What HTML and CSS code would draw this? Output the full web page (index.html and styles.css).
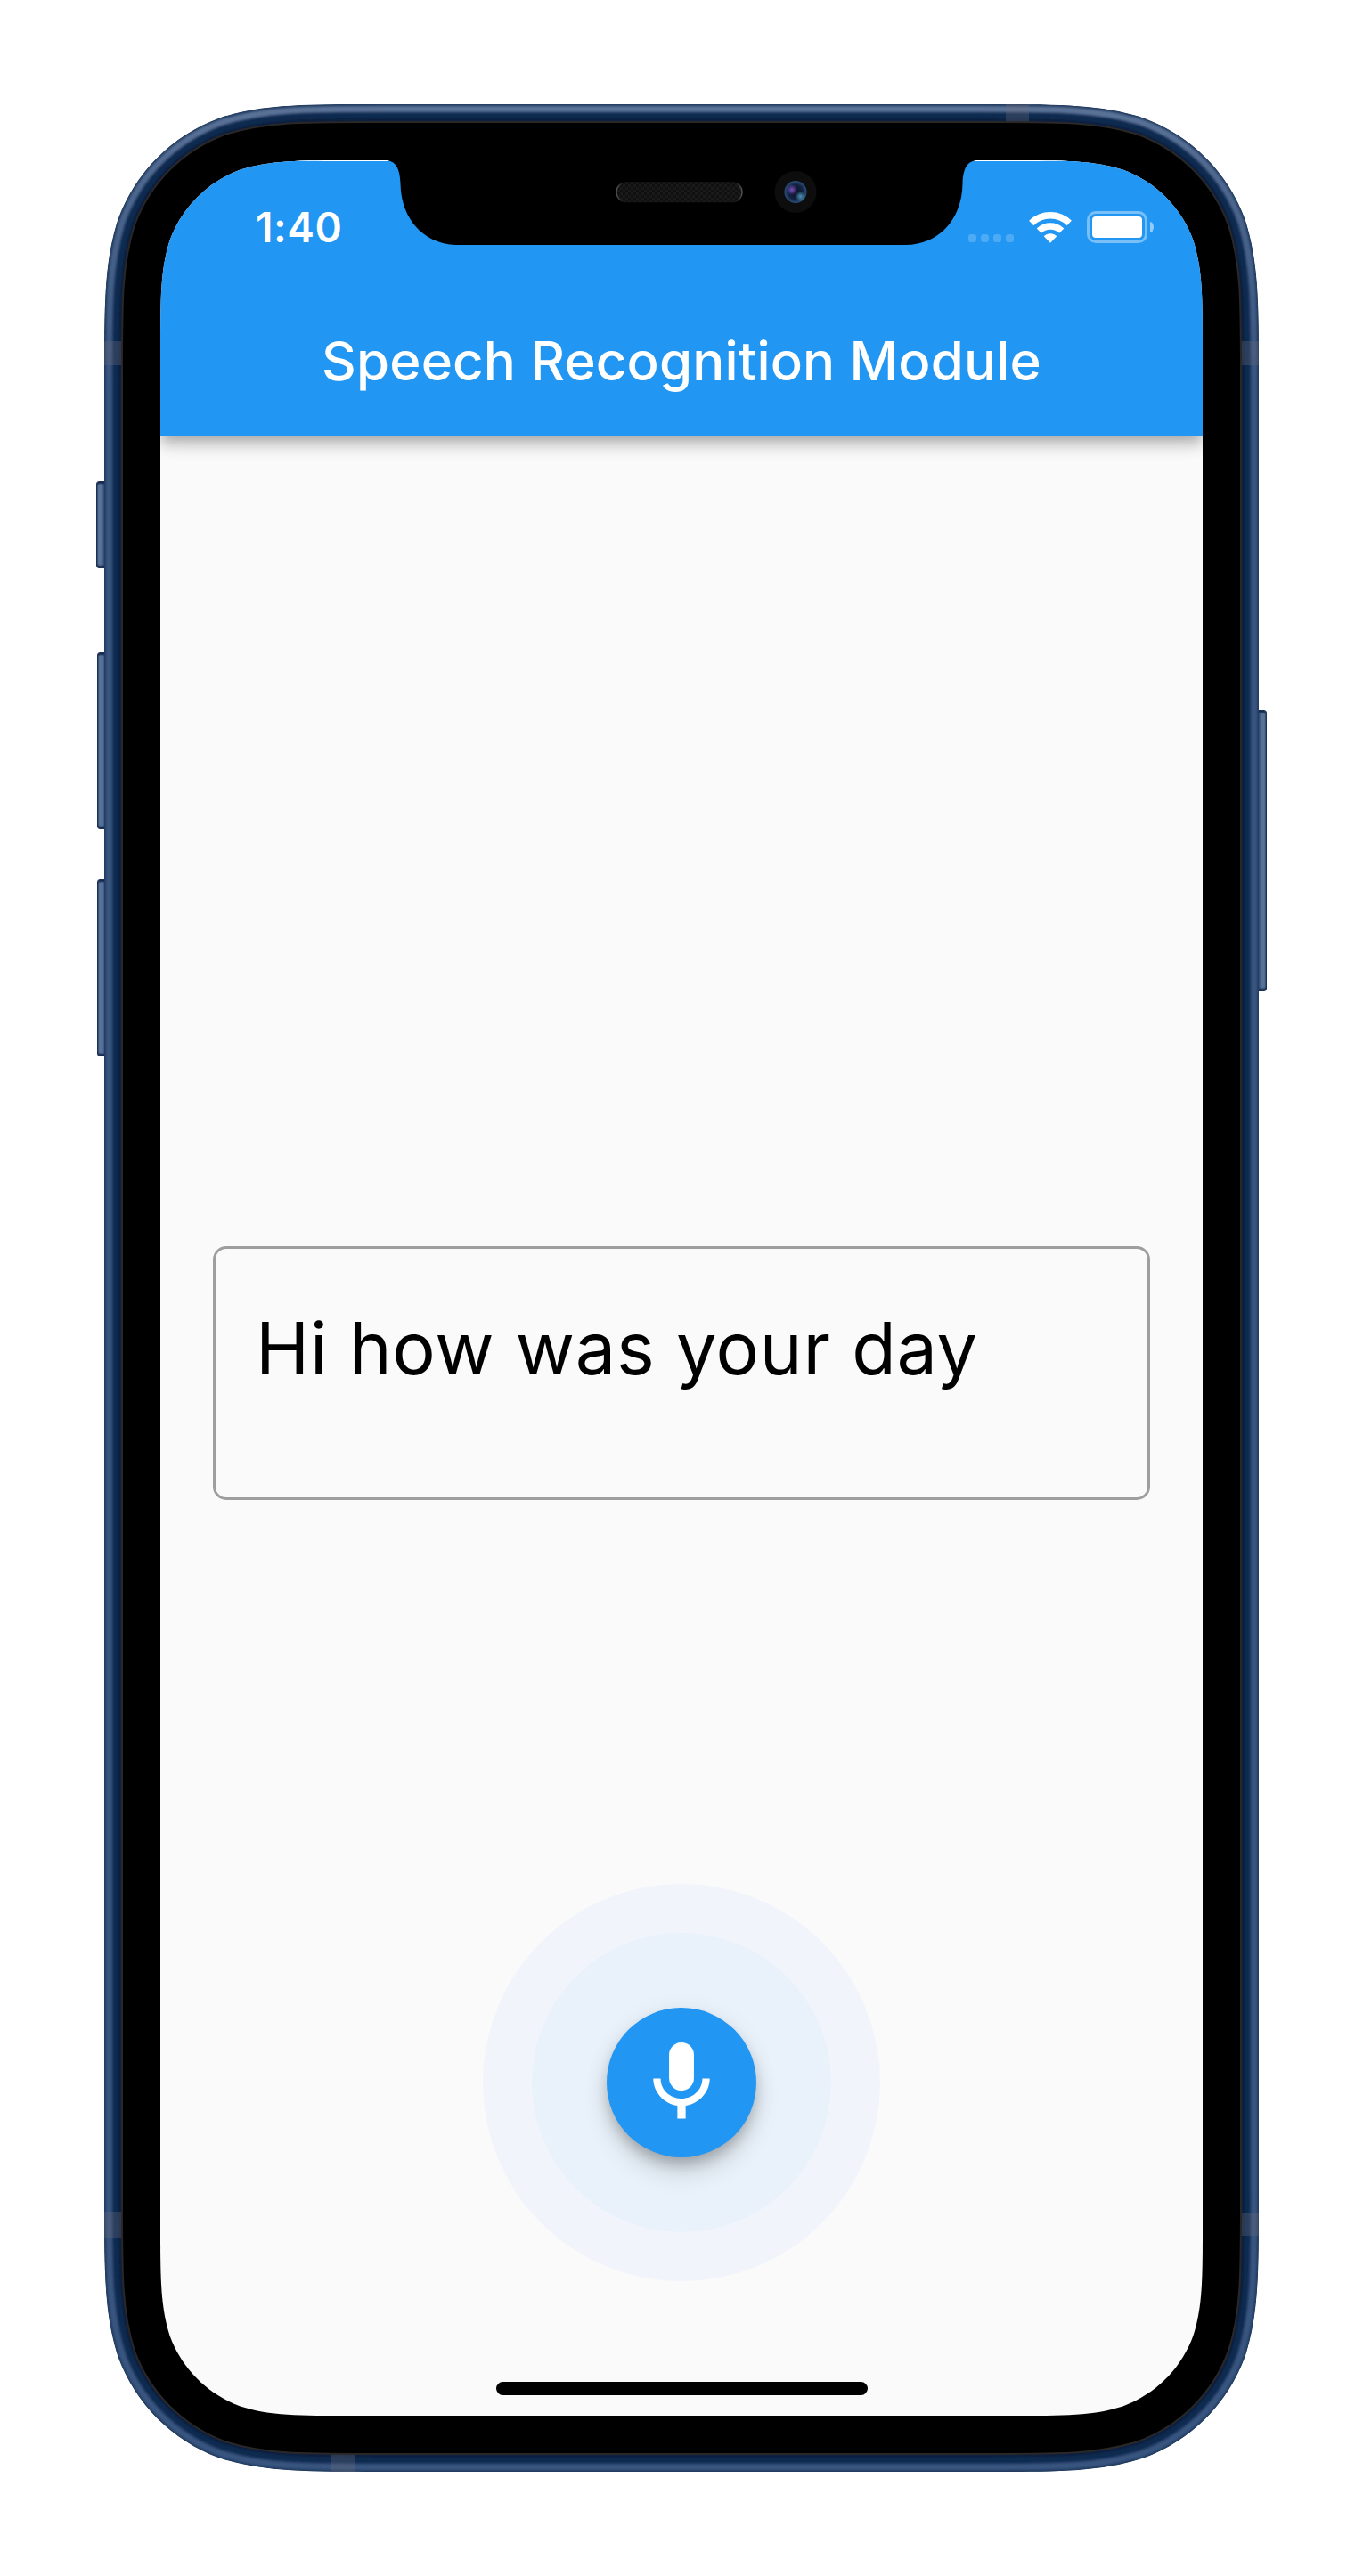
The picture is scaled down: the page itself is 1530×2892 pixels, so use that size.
FILE: index.html
```html
<!DOCTYPE html>
<html lang="en">
<head>
<meta charset="utf-8">
<title>Speech Recognition Module</title>
<link rel="stylesheet" href="styles.css">
</head>
<body>
<div class="phone">
  <i class="key key-mute"></i>
  <i class="key key-up"></i>
  <i class="key key-down"></i>
  <i class="key key-power"></i>

  <svg class="shell" viewBox="0 0 1296 2658" aria-hidden="true">
    <defs>
      <path id="body" d="M313.4 0H982.6C1072.9 0 1118 0 1166.5 15.4C1219.6 34.7 1261.3 76.4 1280.6 129.5C1296 178 1296 223.1 1296 313.4V2344.6C1296 2434.9 1296 2480 1280.6 2528.5C1261.3 2581.6 1219.6 2623.3 1166.5 2642.6C1118 2658 1072.9 2658 982.6 2658H313.4C223.1 2658 178 2658 129.5 2642.6C76.4 2623.3 34.7 2581.6 15.4 2528.5C0 2480 0 2434.9 0 2344.6V313.4C0 223.1 0 178 15.4 129.5C34.7 76.4 76.4 34.7 129.5 15.4C178 0 223.1 0 313.4 0Z"/>
      <clipPath id="bodyClip"><use href="#body"/></clipPath>
      <linearGradient id="shine" gradientUnits="userSpaceOnUse" x1="0" y1="0" x2="0" y2="330">
        <stop offset="0" stop-color="#5b7397"/>
        <stop offset=".35" stop-color="#4b658c"/>
        <stop offset="1" stop-color="#37547f"/>
      </linearGradient>
      <filter id="soft" x="-2%" y="-2%" width="104%" height="104%"><feGaussianBlur stdDeviation="1"/></filter>
    </defs>
    <g clip-path="url(#bodyClip)">
      <use href="#body" fill="#0d2040"/>
      <g fill="none" filter="url(#soft)">
        <use href="#body" stroke="#112a50" stroke-width="32"/>
        <use href="#body" stroke="#1c365e" stroke-width="21"/>
        <use href="#body" stroke="url(#shine)" stroke-width="17"/>
        <use href="#body" stroke="#2c4870" stroke-width="5"/>
        <use href="#body" stroke="#1f3558" stroke-width="2"/>
      </g>
      <g fill="#6a6a78" fill-opacity=".33">
        <path d="M0 266h20v27H0zM1276 266h20v27h-20zM0 2366h20v29H0zM1276 2367h20v26h-20zM1012 0h26v20h-26zM255 2638h27v20h-27z"/>
      </g>
    </g>
    <path fill="#000" stroke="#2a2827" stroke-width="2" d="M301.3 20H994.7C1075.7 20 1116.2 20 1159.8 33.8C1207.4 51.1 1244.9 88.6 1262.2 136.2C1276 179.8 1276 220.3 1276 301.3V2356.7C1276 2437.7 1276 2478.2 1262.2 2521.8C1244.9 2569.4 1207.4 2606.9 1159.8 2624.2C1116.2 2638 1075.7 2638 994.7 2638H301.3C220.3 2638 179.8 2638 136.2 2624.2C88.6 2606.9 51.1 2569.4 33.8 2521.8C20 2478.2 20 2437.7 20 2356.7V301.3C20 220.3 20 179.8 33.8 136.2C51.1 88.6 88.6 51.1 136.2 33.8C179.8 20 220.3 20 301.3 20Z"/>
  </svg>

  <div class="screen">
    <header class="app-bar">
      <div class="status">
        <span class="time">1:40</span>
        <div class="indicators">
          <div class="cell"><i></i><i></i><i></i><i></i></div>
          <svg class="wifi" width="50" height="38" viewBox="0 0 50 38" aria-hidden="true">
            <path fill="#fff" stroke="#fff" stroke-width="1" stroke-linejoin="round" d="M25 36.3L18.2 29.3C22 26 28 26 31.8 29.3Z"/>
            <path fill="none" stroke="#fff" stroke-width="7.4" d="M12.3 23.2C19.3 16.2 30.7 16.2 37.7 23.2"/>
            <path fill="none" stroke="#fff" stroke-width="7.4" d="M3.7 14.5C15.5 2.8 34.5 2.8 46.3 14.5"/>
          </svg>
          <div class="battery"><i></i></div>
          <i class="battery-tip"></i>
        </div>
      </div>
      <h1 class="title">Speech Recognition Module</h1>
    </header>
    <main class="content">
      <div class="result">Hi how was your day</div>
      <div class="halo-outer">
        <div class="halo-inner">
          <button class="mic" aria-label="Listen">
            <svg width="108" height="108" viewBox="0 0 24 24" fill="#fff" aria-hidden="true">
              <rect x="8.9" y="2" width="6.2" height="12" rx="3.1"/>
              <path d="M17.2 11c0 3-2.5 5-5.2 5S6.8 14 6.8 11H4.95c0 3.4 2.7 6.3 6.02 6.8V21h2.06v-3.2c3.3-.5 6.02-3.4 6.02-6.8z"/>
            </svg>
          </button>
        </div>
      </div>
      <div class="home-bar"></div>
    </main>
  </div>

  <svg class="notch" width="666" height="96" viewBox="432 180 666 96" aria-hidden="true">
    <defs>
      <pattern id="mesh" width="6" height="6" patternUnits="userSpaceOnUse">
        <rect width="6" height="6" fill="#101010"/><path fill="#1a1a1a" d="M0 0h3v3H0zM3 3h3v3H3z"/>
      </pattern>
      <linearGradient id="rim" x1="0" x2="1" y1="0" y2="0">
        <stop offset="0" stop-color="#505050"/><stop offset=".05" stop-color="#161616"/>
        <stop offset=".95" stop-color="#161616"/><stop offset="1" stop-color="#505050"/>
      </linearGradient>
      <radialGradient id="lens">
        <stop offset="0" stop-color="#0a1228"/><stop offset=".65" stop-color="#14213f"/><stop offset="1" stop-color="#2a507e"/>
      </radialGradient>
      <radialGradient id="violet"><stop offset="0" stop-color="#7a4fc0"/><stop offset="1" stop-color="#7a4fc0" stop-opacity="0"/></radialGradient>
      <radialGradient id="cyan"><stop offset="0" stop-color="#4b93b5"/><stop offset="1" stop-color="#4b93b5" stop-opacity="0"/></radialGradient>
    </defs>
    <path fill="#000" d="M432 180C444 180 449 189 449.5 206C450 246 476 275 514 275H1016C1054 275 1080 246 1080.5 206C1081 189 1086 180 1098 180Z"/>
    <rect x="692" y="205" width="141" height="21.5" rx="10.7" fill="url(#mesh)" stroke="url(#rim)" stroke-width="1.5"/>
    <circle cx="893" cy="215.5" r="23.5" fill="#0d0d0d"/>
    <circle cx="893" cy="215.5" r="12.5" fill="url(#lens)"/>
    <circle cx="889" cy="213" r="6" fill="url(#violet)"/>
    <circle cx="898.5" cy="220.5" r="6" fill="url(#cyan)"/>
  </svg>
</div>
</body>
</html>
```
FILE: styles.css
```css
* { box-sizing: border-box; }

body {
  margin: 0;
  background: #fff;
  font-family: Inter, "Liberation Sans", sans-serif;
}

.phone {
  position: relative;
  width: 1296px;
  height: 2658px;
  margin: 117px;
  padding: 63px;
}

.shell {
  position: absolute;
  inset: 0;
  width: 1296px;
  height: 2658px;
}

/* Hardware buttons stick out beyond the frame */
.key {
  position: absolute;
  left: -8px;
  width: 14px;
  border: 1px solid #1c3056;
  border-radius: 3px;
  background: linear-gradient(90deg, #5d779c, #566f94 45%, #34507a 62%);
  box-shadow: inset 0 2px 2px #14264a, inset 0 -2px 2px #14264a;
}
.key-mute { left: -9px; top: 423px; height: 98px; }
.key-up { top: 615px; height: 199px; }
.key-down { top: 870px; height: 199px; }
.key-power {
  left: auto;
  right: -9px;
  top: 680px;
  height: 316px;
  background: linear-gradient(270deg, #5d779c, #546d92 45%, #34507a 62%);
}

.screen {
  position: relative;
  display: flex;
  flex-direction: column;
  width: 1170px;
  height: 2532px;
  background: #fafafa;
  clip-path: path("M217.1 0H952.9C1015.4 0 1046.7 0 1080.3 10.6C1117.1 24 1146 52.9 1159.4 89.7C1170 123.3 1170 154.6 1170 217.1V2314.9C1170 2377.4 1170 2408.7 1159.4 2442.3C1146 2479.1 1117.1 2508 1080.3 2521.4C1046.7 2532 1015.4 2532 952.9 2532H217.1C154.6 2532 123.3 2532 89.7 2521.4C52.9 2508 24 2479.1 10.6 2442.3C0 2408.7 0 2377.4 0 2314.9V217.1C0 154.6 0 123.3 10.6 89.7C24 52.9 52.9 24 89.7 10.6C123.3 0 154.6 0 217.1 0Z");
}

.app-bar {
  position: relative;
  flex: none;
  height: 310px;
  border-top: 1px solid #fff;
  background: #2196f3;
  color: #fff;
  box-shadow: 0 6px 12px -3px rgba(0, 0, 0, .2), 0 12px 15px rgba(0, 0, 0, .14), 0 3px 30px rgba(0, 0, 0, .06);
}

.status {
  display: flex;
  justify-content: space-between;
  height: 140px;
  padding: 46px 55px 0 107px;
}
.time {
  font-size: 46px;
  line-height: 56px;
  font-weight: 600;
  letter-spacing: .6px;
}
.indicators {
  display: flex;
  align-items: flex-start;
  padding-top: 9px;
}
.cell { display: flex; gap: 5px; padding-top: 27px; }
.cell i { width: 9px; height: 9px; border-radius: 3px; background: rgba(255, 255, 255, .2); }
.wifi { margin-left: 16px; }
.battery {
  width: 68px;
  height: 36px;
  margin: 1px 0 0 16px;
  padding: 3px;
  border: 3px solid rgba(255, 255, 255, .4);
  border-radius: 10px;
}
.battery i { display: block; height: 24px; border-radius: 4px; background: #fff; }
.battery-tip {
  width: 4px;
  height: 12px;
  margin: 13px 0 0 3px;
  border-radius: 0 4px 4px 0 / 0 6px 6px 0;
  background: rgba(255, 255, 255, .5);
}

.title {
  margin: 0;
  padding-top: 48px;
  text-align: center;
  white-space: nowrap;
  font-size: 60px;
  line-height: 72px;
  font-weight: 500;
  letter-spacing: .15px;
}

.content {
  flex: 1;
  display: flex;
  flex-direction: column;
  align-items: center;
  padding-top: 909px;
}

.result {
  width: 1052px;
  height: 285px;
  padding: 62px 45px 0;
  border: 3px solid #9e9e9e;
  border-radius: 15px;
  color: #000;
  font-size: 81px;
  line-height: 100px;
  letter-spacing: .72px;
  white-space: nowrap;
}

.halo-outer, .halo-inner, .mic {
  display: flex;
  align-items: center;
  justify-content: center;
  border-radius: 50%;
}
.halo-outer { width: 446px; height: 446px; margin-top: 431px; background: #f1f5fb; }
.halo-inner { width: 336px; height: 336px; background: #e9f2fa; }
.mic {
  width: 168px;
  height: 168px;
  padding: 0;
  border: 0;
  background: #2196f3;
  box-shadow: 0 9px 15px -3px rgba(0, 0, 0, .22), 0 18px 30px -3px rgba(0, 0, 0, .16), 0 3px 30px rgba(0, 0, 0, .05);
}

.home-bar {
  width: 417px;
  height: 15px;
  margin: 113px 0 0 1px;
  border-radius: 8px;
  background: #000;
}

.notch { position: absolute; left: 315px; top: 63px; }
```
